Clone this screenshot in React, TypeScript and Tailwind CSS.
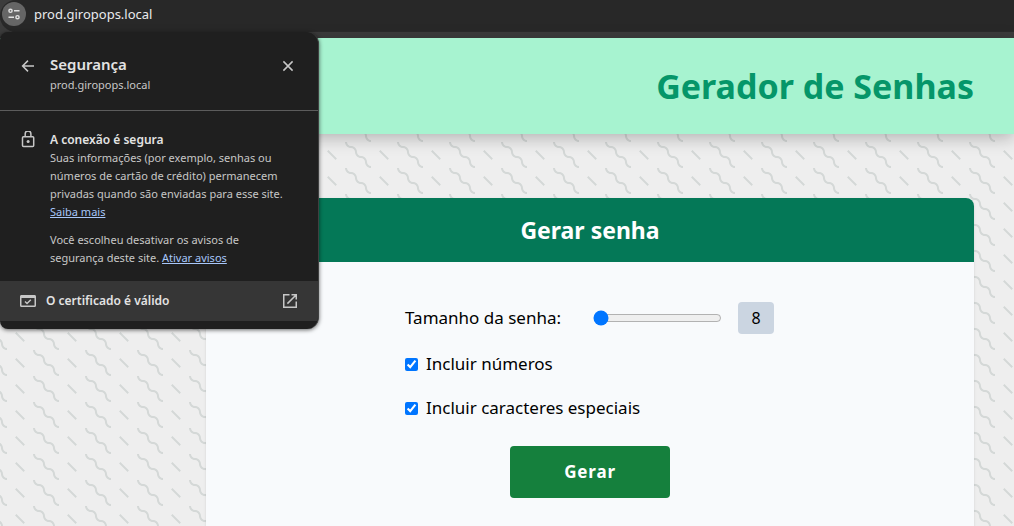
import { useState } from 'react';

function WigglePattern() {
  return (
    <svg aria-hidden="true" className="absolute inset-0 h-full w-full">
      <defs>
        <pattern id="wiggle" x="33" y="0" width="52" height="26" patternUnits="userSpaceOnUse">
          <path
            fill="#d4d8d7"
            d="M10 10c0-2.21-1.79-4-4-4-3.314 0-6-2.686-6-6h2c0 2.21 1.79 4 4 4 3.314 0 6 2.686 6 6 0 2.21 1.79 4 4 4 3.314 0 6 2.686 6 6 0 2.21 1.79 4 4 4v2c-3.314 0-6-2.686-6-6 0-2.21-1.79-4-4-4-3.314 0-6-2.686-6-6zm25.464-1.95l8.486 8.486-1.414 1.414-8.486-8.486 1.414-1.414z"
          />
        </pattern>
      </defs>
      <rect width="100%" height="100%" fill="url(#wiggle)" />
    </svg>
  );
}

function AddressBar() {
  return (
    <div className="flex h-[38px] flex-col bg-[#3c3c3c]">
      <div className="flex h-8 items-center gap-2 rounded-l-full border-b border-[#2a2a2a] bg-[#282828] pb-[3px] pl-0.5">
        <button
          type="button"
          aria-label="Ver informações do site"
          className="flex size-6 items-center justify-center rounded-full bg-[#666666] text-[#e3e3e3]"
        >
          <svg width="14" height="14" viewBox="0 0 14 14" fill="none" stroke="currentColor" strokeWidth="1.4">
            <circle cx="3.5" cy="3.8" r="1.6" />
            <path d="M7 3.8h5.5M1.5 10.2H7" />
            <circle cx="10.5" cy="10.2" r="1.6" />
          </svg>
        </button>
        <span className="text-[13px] leading-5 text-[#e8eaed]">prod.giropops.local</span>
      </div>
    </div>
  );
}

function SecurityPopup() {
  return (
    <section
      aria-label="Segurança"
      className="absolute left-0 top-8 z-20 w-[319px] overflow-hidden rounded-l-lg rounded-r-xl border-r border-[#3f4040] bg-[#1f1f1f] pb-2 text-[11px] leading-[18px] text-[#c7c7c7] shadow-[0_1px_4px_rgba(0,0,0,0.6)]"
    >
      <div className="flex items-start border-b border-[#5c5c5c] pb-4 pl-5 pr-[22px] pt-5">
        <button type="button" aria-label="Voltar" className="mr-3.5 mt-1.5 size-4">
          <svg width="16" height="16" viewBox="0 0 16 16" fill="none" stroke="currentColor" strokeWidth="1.5">
            <path d="M14 8H3M8 2.6 2.6 8 8 13.4" />
          </svg>
        </button>
        <div className="flex-1">
          <h2 className="text-[15px] font-semibold leading-6 text-[#e3e3e3]">Segurança</h2>
          <p>prod.giropops.local</p>
        </div>
        <button type="button" aria-label="Fechar" className="mt-1.5 size-4">
          <svg width="16" height="16" viewBox="0 0 16 16" fill="none" stroke="currentColor" strokeWidth="1.5">
            <path d="m3.4 3.4 9.2 9.2M12.6 3.4l-9.2 9.2" />
          </svg>
        </button>
      </div>
      <div className="flex gap-3.5 pb-3.5 pl-5 pr-5 pt-5">
        <svg width="16" height="18" viewBox="0 0 16 18" fill="none" stroke="currentColor" strokeWidth="1.5" className="shrink-0">
          <rect x="2.5" y="5.7" width="11.2" height="9.8" rx="1" />
          <path d="M5.2 5.5V2.8a2.85 2.85 0 0 1 5.7 0v2.7" />
          <circle cx="8.1" cy="10.6" r="1.5" fill="currentColor" stroke="none" />
        </svg>
        <div>
          <h3 className="text-xs font-semibold leading-[18px] text-[#e3e3e3]">A conexão é segura</h3>
          <p className="whitespace-nowrap">
            Suas informações (por exemplo, senhas ou
            <br />
            números de cartão de crédito) permanecem
            <br />
            privadas quando são enviadas para esse site.
            <br />
            <a href="#saiba-mais" className="text-[#a8c7fa] underline">Saiba mais</a>
          </p>
          <p className="mt-2.5 whitespace-nowrap">
            Você escolheu desativar os avisos de
            <br />
            segurança deste site. <a href="#avisos" className="text-[#a8c7fa] underline">Ativar avisos</a>
          </p>
        </div>
      </div>
      <button type="button" className="flex h-10 w-full items-center gap-2.5 bg-[#363636] pl-5 pr-5 text-left">
        <svg width="16" height="14" viewBox="0 0 16 14" fill="none" stroke="currentColor" strokeWidth="1.5">
          <rect x="0.75" y="1.75" width="14.5" height="10.5" rx="0.8" />
          <path d="M0.8 2.5h14.4" strokeWidth="3" />
          <path d="m5 7.6 2 2 3.8-3.9" strokeWidth="1.4" />
        </svg>
        <span className="flex-1 text-xs font-semibold text-[#e3e3e3]">O certificado é válido</span>
        <svg width="16" height="16" viewBox="0 0 16 16" fill="none" stroke="currentColor" strokeWidth="1.5">
          <path d="M7.5 1.75H1.75v12.5h12.5V8.5M9.5 1.75h4.75V6.5M13.8 2.2 5.4 10.6" />
        </svg>
      </button>
    </section>
  );
}

export default function App() {
  const [size, setSize] = useState(8);
  const [numbers, setNumbers] = useState(true);
  const [special, setSpecial] = useState(true);

  return (
    <div className="relative flex min-h-screen flex-col font-['Noto_Sans',sans-serif]">
      <AddressBar />
      <SecurityPopup />
      <div className="relative flex flex-1 flex-col bg-[#eeeeee]">
        <WigglePattern />
        <header className="relative flex h-24 items-center justify-end bg-[#a7f3d0] px-10 shadow-[0_4px_16px_rgba(0,0,0,0.25)]">
          <h1 className="text-[34px] font-bold leading-10 text-[#059669]">Gerador de Senhas</h1>
        </header>
        <main className="relative ml-auto mr-10 mt-16 flex w-full max-w-3xl flex-1 flex-col rounded-t-lg bg-[#f8fafc] shadow-sm">
          <h2 className="flex h-16 items-center justify-center rounded-t-lg bg-[#047857] text-[23px] font-bold text-white">
            Gerar senha
          </h2>
          <form className="mx-auto flex w-[370px] flex-col pt-10 text-[17px] text-black" onSubmit={(e) => e.preventDefault()}>
            <div className="flex h-8 w-[369px] items-center">
              <label htmlFor="size" className="flex-1">Tamanho da senha:</label>
              <input
                id="size"
                type="range"
                min={8}
                max={32}
                value={size}
                onChange={(e) => setSize(Number(e.target.value))}
                className="mr-4 w-[129px]"
              />
              <output htmlFor="size" className="flex h-8 w-9 items-center justify-center rounded bg-[#cbd5e1] text-base">
                {size}
              </output>
            </div>
            <label className="mt-4 flex h-7 items-center gap-2">
              <input type="checkbox" checked={numbers} onChange={(e) => setNumbers(e.target.checked)} className="size-[13px]" />
              Incluir números
            </label>
            <label className="mt-4 flex h-7 items-center gap-2">
              <input type="checkbox" checked={special} onChange={(e) => setSpecial(e.target.checked)} className="size-[13px]" />
              Incluir caracteres especiais
            </label>
            <button
              type="submit"
              className="mx-auto mb-7 mt-6 h-[52px] w-40 rounded bg-[#15803d] text-[17px] font-bold tracking-wider text-white"
            >
              Gerar
            </button>
          </form>
        </main>
      </div>
    </div>
  );
}
